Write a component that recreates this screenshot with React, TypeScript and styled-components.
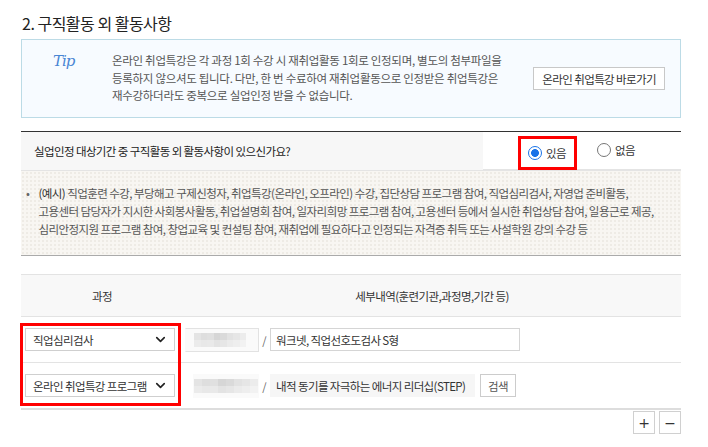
import React from 'react';
import styled, { createGlobalStyle } from 'styled-components';
import { ChevronDown } from 'lucide-react';

const GlobalStyle = createGlobalStyle`
  body {
    margin: 0;
    background: #fff;
    font-family: "Noto Sans CJK KR", "Noto Sans", sans-serif;
    color: #333;
  }
`;

const Page = styled.div`
  width: 660px;
  padding: 0 0 0 21px;
`;

const Title = styled.h2`
  margin: 0;
  padding: 11px 0 0 1px;
  height: 28px;
  font-size: 16px;
  font-weight: 400;
  color: #222;
  letter-spacing: -0.5px;
`;

const TipBox = styled.div`
  display: flex;
  align-items: center;
  height: 77px;
  border: 1px solid #bcdbe6;
  background: #f7fbff;
`;

const TipLogo = styled.div`
  align-self: flex-start;
  width: 59px;
  padding: 12px 0 0 31px;
  font-family: "DejaVu Serif", serif;
  font-style: italic;
  font-size: 15px;
  color: #4a86d4;
  letter-spacing: -1px;
`;

const TipText = styled.p`
  flex: 1;
  margin: 0;
  font-size: 11.5px;
  line-height: 17.5px;
  color: #555;
  letter-spacing: -0.3px;
`;

const LinkButton = styled.button`
  margin-right: 15px;
  height: 23px;
  padding: 0 8px;
  border: 1px solid #c8c8c8;
  background: #fff;
  font-family: inherit;
  font-size: 11.5px;
  color: #333;
  letter-spacing: -0.6px;
`;

const QuestionRow = styled.div`
  display: grid;
  grid-template-columns: 462px 1fr;
  height: 37px;
  margin-top: 13px;
  border-top: 1px solid #333;
  border-bottom: 2px solid #e4e4e4;
`;

const QuestionLabel = styled.div`
  display: flex;
  align-items: center;
  padding-left: 13px;
  background: #f7f7f7;
  font-size: 11.5px;
  color: #222;
  letter-spacing: -0.6px;
`;

const RadioCell = styled.div`
  display: flex;
  align-items: flex-start;
  padding: 4px 0 0 35px;
`;

const Highlight = styled.div`
  display: flex;
  align-items: center;
  box-sizing: border-box;
  border: 3px solid #f00;
`;

const RadioMark = styled.span<{ $checked?: boolean }>`
  box-sizing: border-box;
  width: 14px;
  height: 14px;
  border-radius: 50%;
  border: 1px solid ${p => (p.$checked ? '#1a73e8' : '#767676')};
  background: ${p => (p.$checked ? 'radial-gradient(circle, #1a73e8 0 3.6px, #fff 4.2px)' : '#fff')};
`;

const RadioOption = styled.label<{ $boxed?: boolean }>`
  display: flex;
  align-items: center;
  gap: 4px;
  height: 28px;
  padding: 0 ${p => (p.$boxed ? '8px 0 7px' : '0 0 20px')};
  font-size: 11.5px;
  color: #333;
  letter-spacing: -0.6px;
`;

const ExampleBox = styled.div`
  height: 85px;
  padding: 13px 0 0 5px;
  box-sizing: border-box;
  background-color: #f8f6f2;
  background-image: radial-gradient(#eeebe5 0.8px, transparent 1px);
  background-size: 4px 4px;
  border-bottom: 1px solid #aaa;
`;

const ExampleList = styled.ul`
  margin: 0;
  padding: 0;
  list-style: none;
`;

const ExampleItem = styled.li`
  display: flex;
  gap: 9px;
  font-size: 11.5px;
  line-height: 18px;
  color: #555;
  letter-spacing: -0.55px;

  &::before {
    content: '•';
    color: #666;
  }
`;

const Em = styled.span`
  color: #333;
`;

const Table = styled.div`
  position: relative;
  margin-top: 18px;
  border-top: 1px solid #e3e3e3;
`;

const Row = styled.div<{ $head?: boolean; $last?: boolean }>`
  display: grid;
  grid-template-columns: 162px 1fr;
  height: ${p => (p.$head ? '41px' : '45px')};
  background: ${p => (p.$head ? '#f8f8f8' : '#fff')};
  border-bottom: ${p => (p.$last ? '2px solid #ddd' : '1px solid #e3e3e3')};
`;

const HeadCell = styled.div`
  display: flex;
  align-items: center;
  justify-content: center;
  font-size: 11.5px;
  color: #333;
  letter-spacing: -0.6px;
`;

const SelectCell = styled.div`
  display: flex;
  align-items: center;
  padding-left: 4px;
`;

const Select = styled.div`
  display: flex;
  align-items: center;
  justify-content: space-between;
  box-sizing: border-box;
  width: 150px;
  height: 23px;
  padding: 0 6px 0 7px;
  border: 1px solid #cfcfcf;
  background: #fff;
  font-size: 11.5px;
  color: #333;
  letter-spacing: -0.6px;
  white-space: nowrap;
`;

const DetailCell = styled.div<{ $indent: number }>`
  display: flex;
  align-items: center;
  padding-left: ${p => p.$indent}px;
`;

const Blur = styled.div<{ $w: number; $bordered?: boolean }>`
  display: grid;
  grid-template-columns: repeat(8, 1fr);
  grid-template-rows: 1fr 1fr;
  box-sizing: border-box;
  width: ${p => p.$w}px;
  height: 24px;
  padding: ${p => (p.$bordered ? '4px 12px 4px 8px' : '4px 0')};
  border: 1px solid ${p => (p.$bordered ? '#e2e2e2' : 'transparent')};
  border-left-color: transparent;
  background: #fafafa;
`;

const BlurCell = styled.span<{ $c: string }>`
  background: ${p => p.$c};
`;

const Slash = styled.span`
  width: 11px;
  text-align: center;
  font-size: 11px;
  color: #666;
`;

const TextInput = styled.div<{ $w: number; $readonly?: boolean }>`
  display: flex;
  align-items: center;
  box-sizing: border-box;
  width: ${p => p.$w}px;
  height: 23px;
  padding-left: 5px;
  border: 1px solid ${p => (p.$readonly ? '#f6f6f6' : '#d5d5d5')};
  background: ${p => (p.$readonly ? '#f6f6f6' : '#fff')};
  font-size: 11.5px;
  color: #333;
  letter-spacing: -0.6px;
  white-space: nowrap;
`;

const SmallButton = styled.button`
  height: 23px;
  margin-left: 5px;
  padding: 0 7px;
  border: 1px solid #ccc;
  background: #fff;
  font-family: inherit;
  font-size: 11.5px;
  color: #555;
  letter-spacing: -0.6px;
`;

const SelectFrame = styled.div`
  position: absolute;
  left: -1px;
  top: 48px;
  width: 161px;
  height: 83px;
  box-sizing: border-box;
  border: 3px solid #f00;
  pointer-events: none;
`;

const Actions = styled.div`
  display: flex;
  justify-content: flex-end;
  gap: 4px;
  padding-top: 1px;
`;

const IconButton = styled.button`
  width: 22px;
  height: 23px;
  padding: 0;
  border: 1px solid #d0d0d0;
  background: #fff;
  font-family: "DejaVu Sans", sans-serif;
  font-size: 14px;
  line-height: 1;
  color: #333;
`;

const blurShades = [
  ['#e4e4e4', '#dedede', '#e0e0e0', '#d6d6d6', '#dadada', '#e2e2e2', '#e6e6e6', '#ececec'],
  ['#ebebeb', '#e8e8e8', '#e9e9e9', '#e3e3e3', '#e6e6e6', '#ebebeb', '#eeeeee', '#f2f2f2'],
];

const BlurredField = ({ w, bordered }: { w: number; bordered?: boolean }) => (
  <Blur $w={w} $bordered={bordered}>
    {blurShades.flat().map((c, i) => (
      <BlurCell key={i} $c={c} />
    ))}
  </Blur>
);

const App = () => {
  return (
    <>
      <GlobalStyle />
      <Page>
        <Title>2. 구직활동 외 활동사항</Title>
        <TipBox>
          <TipLogo>Tip</TipLogo>
          <TipText>
            온라인 취업특강은 각 과정 1회 수강 시 재취업활동 1회로 인정되며, 별도의 첨부파일을
            <br />
            등록하지 않으셔도 됩니다. 다만, 한 번 수료하여 재취업활동으로 인정받은 취업특강은
            <br />
            재수강하더라도 중복으로 실업인정 받을 수 없습니다.
          </TipText>
          <LinkButton>온라인 취업특강 바로가기</LinkButton>
        </TipBox>

        <QuestionRow>
          <QuestionLabel>실업인정 대상기간 중 구직활동 외 활동사항이 있으신가요?</QuestionLabel>
          <RadioCell>
            <Highlight>
              <RadioOption $boxed>
                <RadioMark $checked />
                있음
              </RadioOption>
            </Highlight>
            <RadioOption>
              <RadioMark />
              없음
            </RadioOption>
          </RadioCell>
        </QuestionRow>

        <ExampleBox>
          <ExampleList>
            <ExampleItem>
              <span>
                <Em>(예시)</Em> 직업훈련 수강, 부당해고 구제신청자, 취업특강(온라인, 오프라인) 수강, 집단상담 프로그램 참여, 직업심리검사, 자영업 준비활동,
                <br />
                고용센터 담당자가 지시한 사회봉사활동, 취업설명회 참여, 일자리희망 프로그램 참여, 고용센터 등에서 실시한 취업상담 참여, 일용근로 제공,
                <br />
                심리안정지원 프로그램 참여, 창업교육 및 컨설팅 참여, 재취업에 필요하다고 인정되는 자격증 취득 또는 사설학원 강의 수강 등
              </span>
            </ExampleItem>
          </ExampleList>
        </ExampleBox>

        <Table>
          <Row $head>
            <HeadCell>과정</HeadCell>
            <HeadCell>세부내역(훈련기관,과정명,기간 등)</HeadCell>
          </Row>
          <Row>
            <SelectCell>
              <Select>
                직업심리검사
                <ChevronDown size={15} strokeWidth={2.6} color="#222" />
              </Select>
            </SelectCell>
            <DetailCell $indent={2}>
              <BlurredField w={74} bordered />
              <Slash>/</Slash>
              <TextInput $w={250}>워크넷, 직업선호도검사 S형</TextInput>
            </DetailCell>
          </Row>
          <Row $last>
            <SelectCell>
              <Select>
                온라인 취업특강 프로그램
                <ChevronDown size={15} strokeWidth={2.6} color="#222" />
              </Select>
            </SelectCell>
            <DetailCell $indent={10}>
              <BlurredField w={66} />
              <Slash>/</Slash>
              <TextInput $w={205} $readonly>
                내적 동기를 자극하는 에너지 리더십(STEP)
              </TextInput>
              <SmallButton>검색</SmallButton>
            </DetailCell>
          </Row>
          <SelectFrame />
        </Table>

        <Actions>
          <IconButton>+</IconButton>
          <IconButton>−</IconButton>
        </Actions>
      </Page>
    </>
  );
};

export default App;
